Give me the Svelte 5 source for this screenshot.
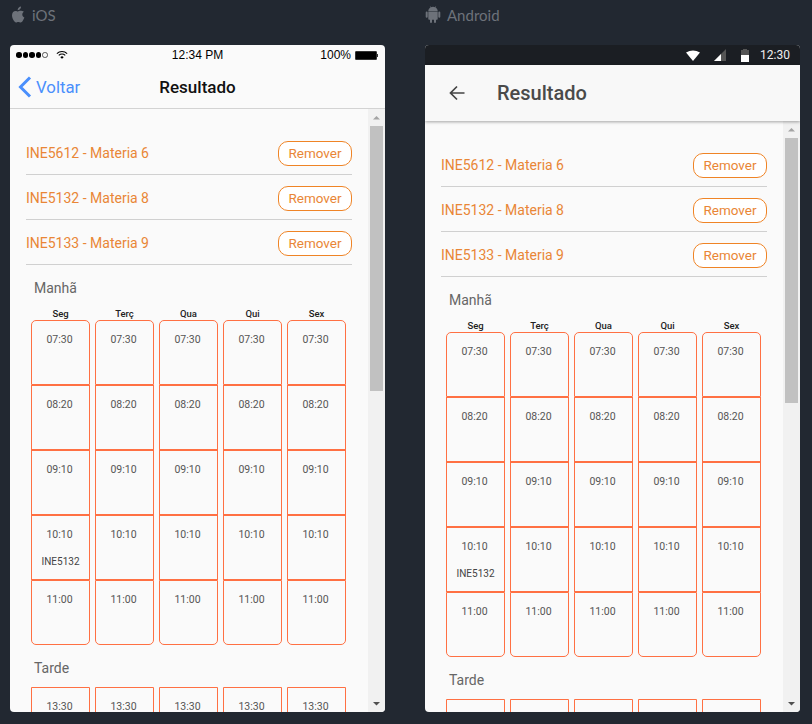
<script lang="ts">
  const materias = [
    { id: 'INE5612', nome: 'Materia 6' },
    { id: 'INE5132', nome: 'Materia 8' },
    { id: 'INE5133', nome: 'Materia 9' },
  ]
  const dias = ['Seg', 'Terç', 'Qua', 'Qui', 'Sex']
  const manha = ['07:30', '08:20', '09:10', '10:10', '11:00']
  const tarde = ['13:30']
</script>

{#snippet grade(horas: string[], showDays: boolean)}
  <div class="grade">
    {#each dias as dia, d}
      <div class="coluna">
        {#if showDays}<div class="dia">{dia}</div>{/if}
        <div class="celulas">
          {#each horas as hora, h}
            <div class="celula">
              <span class="hora">{hora}</span>
              {#if d === 0 && h === 3}<span class="aula">INE5132</span>{/if}
            </div>
          {/each}
        </div>
      </div>
    {/each}
  </div>
{/snippet}

{#snippet conteudo()}
  <div class="corpo">
    <div class="scroll">
      <ul class="lista">
        {#each materias as m}
          <li>
            <span class="materia">{m.id} - {m.nome}</span>
            <button class="remover">Remover</button>
          </li>
        {/each}
      </ul>
      <h3 class="turno manha">Manhã</h3>
      {@render grade(manha, true)}
      <h3 class="turno tarde">Tarde</h3>
      {@render grade(tarde, false)}
    </div>
    <div class="scrollbar">
      <svg class="seta" width="17" height="17" viewBox="0 0 17 17"><path d="M5 10.5 L8.5 7 L12 10.5 Z" fill="#a3a3a3" /></svg>
      <div class="trilho"><div class="thumb"></div></div>
      <svg class="seta" width="17" height="17" viewBox="0 0 17 17"><path d="M5 7 L12 7 L8.5 10.5 Z" fill="#505050" /></svg>
    </div>
  </div>
{/snippet}

<div class="pagina">
  <section class="device">
    <div class="rotulo">
      <svg width="16" height="17" viewBox="0 0 16 17"><path fill="#6d727a" d="M11 0.5c.1 1-.3 1.900-.9 2.600-.6.7-1.500 1.200-2.400 1.100-.1-.9.3-1.900.9-2.500C9.200 1 10.200.6 11 .5zM13.900 5.800c-1 .7-1.600 1.600-1.600 2.800 0 1.400.8 2.400 2.100 3-.4 1.100-.9 2.100-1.600 3.100-.6.9-1.300 1.700-2.200 1.700s-1.200-.5-2.300-.5-1.400.5-2.300.5-1.600-.9-2.300-1.900C2.700 12.900 2 11 2 9.200 2 6.400 3.800 4.900 5.600 4.900c.9 0 1.700.6 2.300.6.6 0 1.500-.7 2.600-.7.9 0 2.400.3 3.400 1z" /></svg>
      <span>iOS</span>
    </div>
    <div class="tela">
      <div class="ios-status">
        <div class="sinal">
          <i></i><i></i><i></i><i></i><i class="vazio"></i>
          <svg width="12" height="10" viewBox="0 0 14 11"><path d="M1 4a8.500 8.500 0 0 1 12 0" fill="none" stroke="#000" stroke-width="1.200" /><path d="M3.200 6a5.500 5.500 0 0 1 7.600 0" fill="none" stroke="#000" stroke-width="1.200" /><path d="M5 8a2.800 2.800 0 0 1 4 0L7 10z" fill="#000" /></svg>
        </div>
        <span class="ios-hora">12:34 PM</span>
        <div class="ios-bateria">
          <span>100%</span>
          <span class="bat"></span>
          <span class="bat-ponta"></span>
        </div>
      </div>
      <header class="ios-nav">
        <div class="voltar">
          <svg width="14" height="22" viewBox="0 0 14 22"><path d="M12 1.500 L2.500 11 L12 20.500" fill="none" stroke="#4a8ffc" stroke-width="3" /></svg>
          <span>Voltar</span>
        </div>
        <span class="ios-titulo">Resultado</span>
      </header>
      {@render conteudo()}
    </div>
  </section>

  <section class="device">
    <div class="rotulo">
      <svg width="16" height="17" viewBox="0 0 16 17"><path fill="#6d727a" d="M3.300 5.500h9.400v7.300c0 .6-.4 1-1 1h-.7v2.200a1 1 0 0 1-2 0v-2.200H7v2.200a1 1 0 0 1-2 0v-2.200h-.7c-.6 0-1-.4-1-1zM1.700 5.500a1 1 0 0 1 1 1v4.200a1 1 0 0 1-2 0V6.500a1 1 0 0 1 1-1zM14.300 5.500a1 1 0 0 1 1 1v4.200a1 1 0 0 1-2 0V6.500a1 1 0 0 1 1-1zM3.300 4.900C3.400 3.300 4.300 2 5.500 1.400L4.800.3l.3-.2.8 1.100A5.300 5.300 0 0 1 10.100 1.200l.8-1.100.3.2-.7 1.100c1.200.6 2.100 1.900 2.200 3.500z" /></svg>
      <span>Android</span>
    </div>
    <div class="tela">
      <div class="and-status">
        <svg width="14" height="11" viewBox="0 0 14 11"><path d="M0 2.500Q7 -1.500 14 2.500L7 11z" fill="#fff" /></svg>
        <svg class="and-sinal" width="12" height="12" viewBox="0 0 12 12"><path d="M12 0V12H0z" fill="#555" /><path d="M7 5V12H0z" fill="#fff" /></svg>
        <svg class="and-bat" width="8" height="13" viewBox="0 0 8 13"><path d="M2 0h4v1h2v12H0V1h2z" fill="#555" /><path d="M0 6h8v7H0z" fill="#fff" /></svg>
        <span>12:30</span>
      </div>
      <header class="and-nav">
        <svg width="16" height="16" viewBox="0 0 16 16"><path d="M15.500 8H1.500M8 1.500L1.500 8L8 14.500" fill="none" stroke="#444" stroke-width="1.700" /></svg>
        <span class="and-titulo">Resultado</span>
      </header>
      {@render conteudo()}
    </div>
  </section>
</div>

<style>
  :global(body) {
    margin: 0;
    background: #222831;
  }

  .pagina {
    display: flex;
    gap: 40px;
    width: 812px;
    height: 724px;
    padding: 0 12px 0 10px;
    box-sizing: border-box;
    font-family: Roboto, sans-serif;
    overflow: hidden;
  }

  .device { width: 375px; }

  .rotulo {
    display: flex;
    align-items: center;
    gap: 6px;
    height: 45px;
    padding-bottom: 16px;
    box-sizing: border-box;
    color: #6d727a;
    font-family: Lato, sans-serif;
    font-size: 15px;
  }

  .tela {
    display: flex;
    flex-direction: column;
    height: 667px;
    background: #fafafa;
    border-radius: 4px;
    overflow: hidden;
  }

  /* iOS bars */
  .ios-status {
    display: flex;
    align-items: center;
    justify-content: space-between;
    height: 20px;
    padding: 0 7px 0 6px;
    font-size: 12px;
    color: #000;
    font-family: "Liberation Sans", sans-serif;
    position: relative;
  }
  .sinal { display: flex; align-items: center; gap: 1px; }
  .sinal i {
    display: block;
    width: 5.500px;
    height: 5.500px;
    border-radius: 50%;
    background: #000;
  }
  .sinal i.vazio {
    box-sizing: border-box;
    border: 1px solid #555;
    background: none;
  }
  .sinal svg { margin-left: 7px; }
  .ios-hora {
    position: absolute;
    left: 0;
    right: 0;
    text-align: center;
  }
  .ios-bateria { display: flex; align-items: center; }
  .ios-bateria span:first-child { margin-right: 4px; }
  .bat {
    width: 20px;
    height: 7px;
    background: #000;
    border: 1px solid #333;
    border-radius: 1px;
  }
  .bat-ponta { width: 1px; height: 3px; background: #333; }

  .ios-nav {
    display: flex;
    align-items: center;
    justify-content: center;
    height: 43px;
    border-bottom: 1px solid #d3d3d3;
    position: relative;
    flex: none;
  }
  .voltar {
    position: absolute;
    left: 8px;
    top: 11px;
    display: flex;
    align-items: center;
    gap: 4px;
    color: #4a8ffc;
    font-size: 16.800px;
  }
  .ios-titulo {
    font-size: 17px;
    font-weight: 500;
    color: #111;
  }

  /* Android bars */
  .and-status {
    display: flex;
    align-items: center;
    justify-content: flex-end;
    height: 20px;
    padding-right: 10px;
    background: #1b1e23;
    color: #eee;
    font-size: 12px;
    flex: none;
  }
  .and-sinal { margin-left: 14px; }
  .and-bat { margin-left: 15px; }
  .and-status span { margin-left: 11px; }

  .and-nav {
    display: flex;
    align-items: center;
    height: 56px;
    padding-left: 24px;
    gap: 32px;
    flex: none;
    background: #f8f8f8;
    box-shadow: 0 1px 3px rgba(0, 0, 0, 0.35);
    position: relative;
    z-index: 1;
  }
  .and-titulo {
    font-size: 20px;
    font-weight: 500;
    color: #4a4a4a;
  }

  /* content + fake scrollbar */
  .corpo {
    flex: 1;
    min-height: 0;
    display: flex;
  }
  .scroll {
    flex: 1;
    min-width: 0;
    overflow: hidden;
    padding: 21px 16px 0;
  }
  .scrollbar {
    width: 17px;
    flex: none;
    display: flex;
    flex-direction: column;
    background: #f1f1f1;
  }
  .seta { display: block; flex: none; }
  .trilho { flex: 1; padding: 0 2px; }
  .thumb { height: 265px; background: #c1c1c1; }

  .lista {
    list-style: none;
    margin: 0;
    padding: 0;
  }
  .lista li {
    display: flex;
    align-items: center;
    justify-content: space-between;
    height: 45px;
    box-sizing: border-box;
    padding-top: 2px;
    border-bottom: 1px solid #d0d0d0;
  }
  .materia {
    font-size: 14px;
    color: #e98636;
  }
  .remover {
    width: 74px;
    height: 25px;
    padding: 0;
    border: 1px solid #ef8426;
    border-radius: 10px;
    background: #fff;
    color: #e98636;
    font-family: inherit;
    font-size: 13.500px;
  }

  .turno {
    margin: 0;
    padding-left: 8px;
    font-size: 14px;
    font-weight: 400;
    color: #666;
    line-height: 16px;
  }
  .manha { margin-top: 15px; }
  .tarde { margin-top: 15px; }

  .grade {
    display: flex;
    gap: 5px;
    padding-left: 5px;
    margin-top: 5px;
  }
  .tarde + .grade { margin-top: 11px; }
  .coluna { width: 59px; flex: none; }
  .dia {
    height: 13px;
    margin-top: 6px;
    text-align: center;
    font-size: 9.500px;
    font-weight: 500;
    color: #222;
    line-height: 14px;
  }
  .celula {
    display: flex;
    flex-direction: column;
    align-items: center;
    height: 65px;
    box-sizing: border-box;
    border: 1px solid #ff7043;
    padding-top: 12px;
    font-size: 10.500px;
    line-height: 13px;
    color: #555;
  }
  .celula:first-child { border-radius: 5px 5px 0 0; }
  .celula:last-child { border-radius: 0 0 5px 5px; }
  .hora { padding-right: 2px; }
  .aula { margin-top: 14px; color: #444; font-size: 10px; }
</style>
